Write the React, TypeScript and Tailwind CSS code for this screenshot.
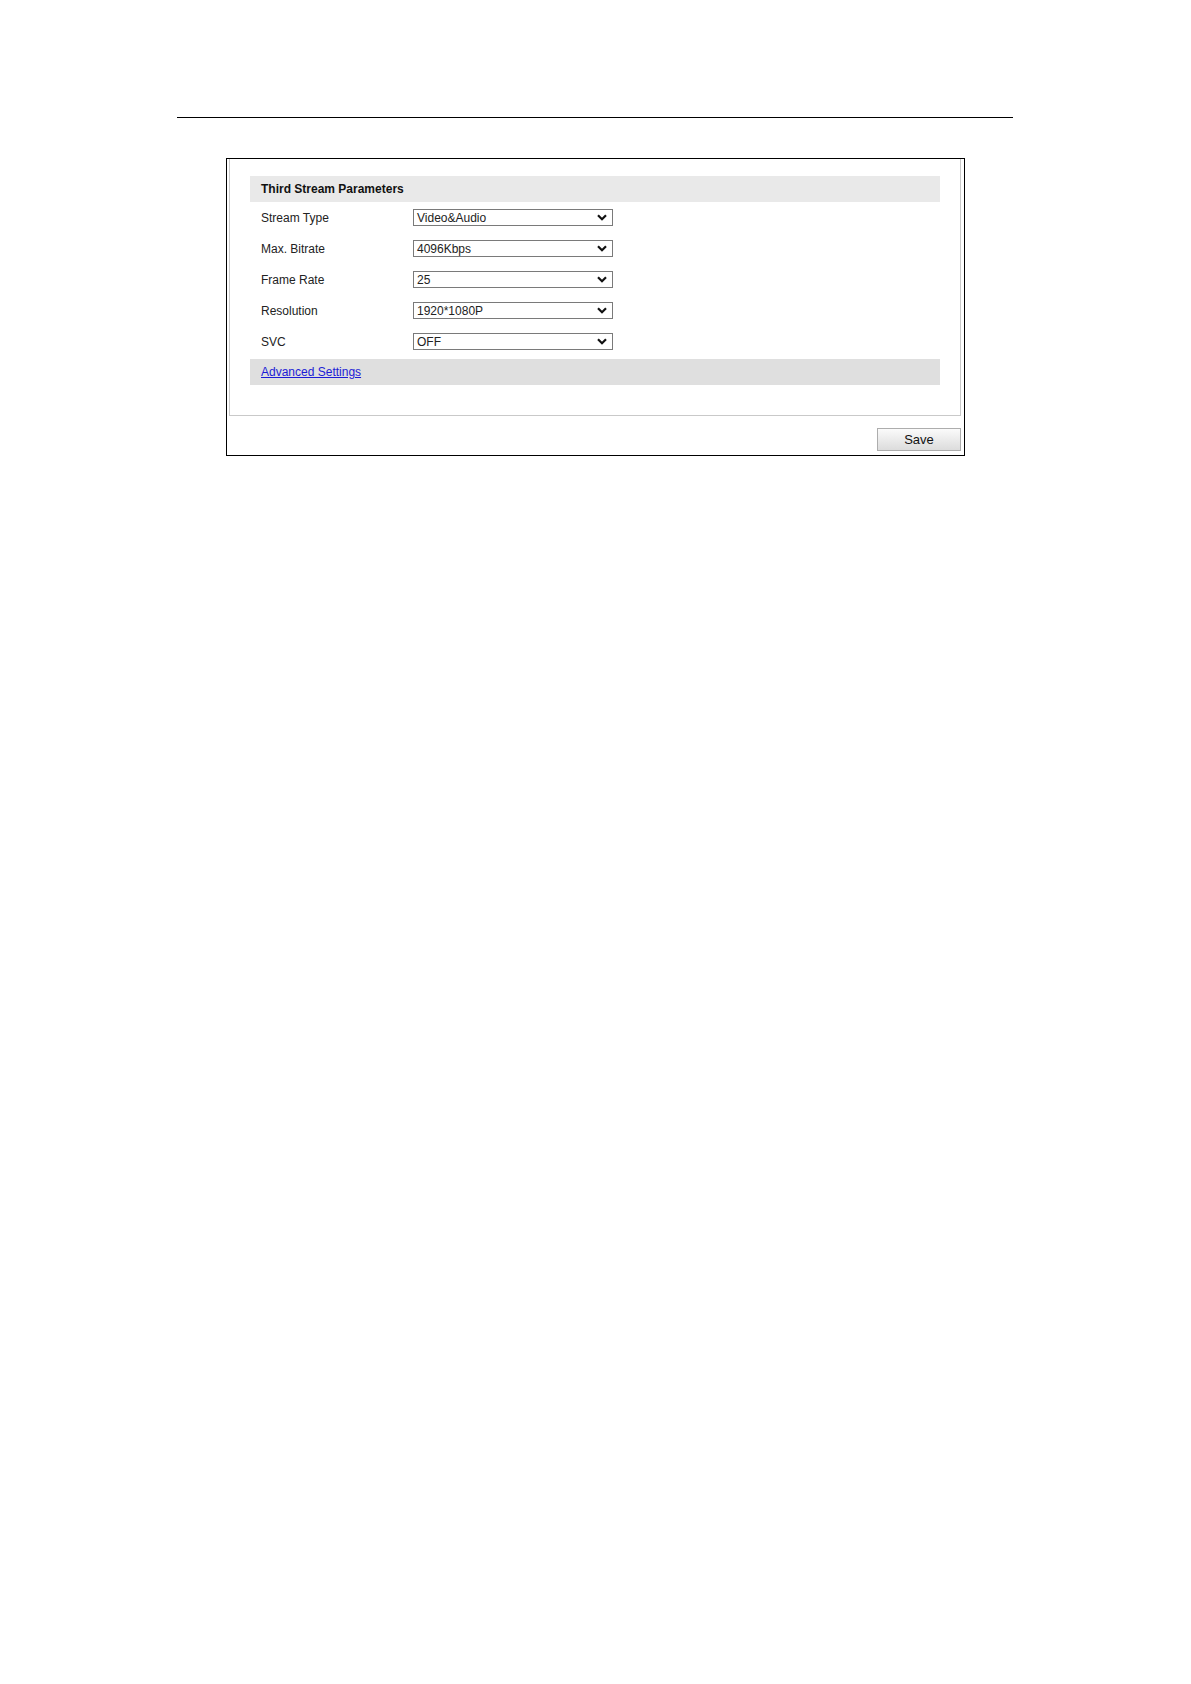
const rows = [
  { label: 'Stream Type', value: 'Video&Audio' },
  { label: 'Max. Bitrate', value: '4096Kbps' },
  { label: 'Frame Rate', value: '25' },
  { label: 'Resolution', value: '1920*1080P' },
  { label: 'SVC', value: 'OFF' },
];

function Chevron() {
  return (
    <svg width="10" height="7" viewBox="0 0 10 7" className="mr-[5px] shrink-0">
      <polyline points="1,1.2 5,5.2 9,1.2" fill="none" stroke="#111" strokeWidth="2.2" />
    </svg>
  );
}

function SelectBox({ value }: { value: string }) {
  return (
    <div className="flex h-[17px] w-[200px] items-center justify-between border border-[#7a7a7a] bg-white pl-[3px]">
      <span className="text-[12px] leading-none text-[#222]">{value}</span>
      <Chevron />
    </div>
  );
}

export default function App() {
  return (
    <div
      className="h-[1684px] w-[1191px] bg-white pt-[117px]"
      style={{ fontFamily: '"Liberation Sans", Arial, sans-serif' }}
    >
      <div className="ml-[177px] h-px w-[836px] bg-black" />

      <div className="ml-[226px] mt-[40px] flex h-[298px] w-[739px] flex-col border border-black pl-[2px] pr-[3px]">
        <div className="border-x border-b border-[#c9c9c9] px-[20px] pb-[30px] pt-[17px]">
          <div className="flex h-[26px] items-center bg-[#e9e9e9] pl-[11px] text-[12px] font-bold text-[#111]">
            Third Stream Parameters
          </div>

          {rows.map((r) => (
            <div key={r.label} className="flex h-[31px] items-center pl-[11px]">
              <span className="w-[152px] text-[12px] text-[#222]">{r.label}</span>
              <SelectBox value={r.value} />
            </div>
          ))}

          <div className="mt-[2px] flex h-[26px] items-center bg-[#dfdfdf] pl-[11px]">
            <a href="#" className="text-[12px] text-[#1c1cd6] underline">
              Advanced Settings
            </a>
          </div>
        </div>

        <div className="flex justify-end pt-[12px]">
          <button className="h-[23px] w-[84px] border border-[#adadad] bg-gradient-to-b from-[#fbfbfb] to-[#dcdcdc] text-[13px] text-[#111]">
            Save
          </button>
        </div>
      </div>
    </div>
  );
}
